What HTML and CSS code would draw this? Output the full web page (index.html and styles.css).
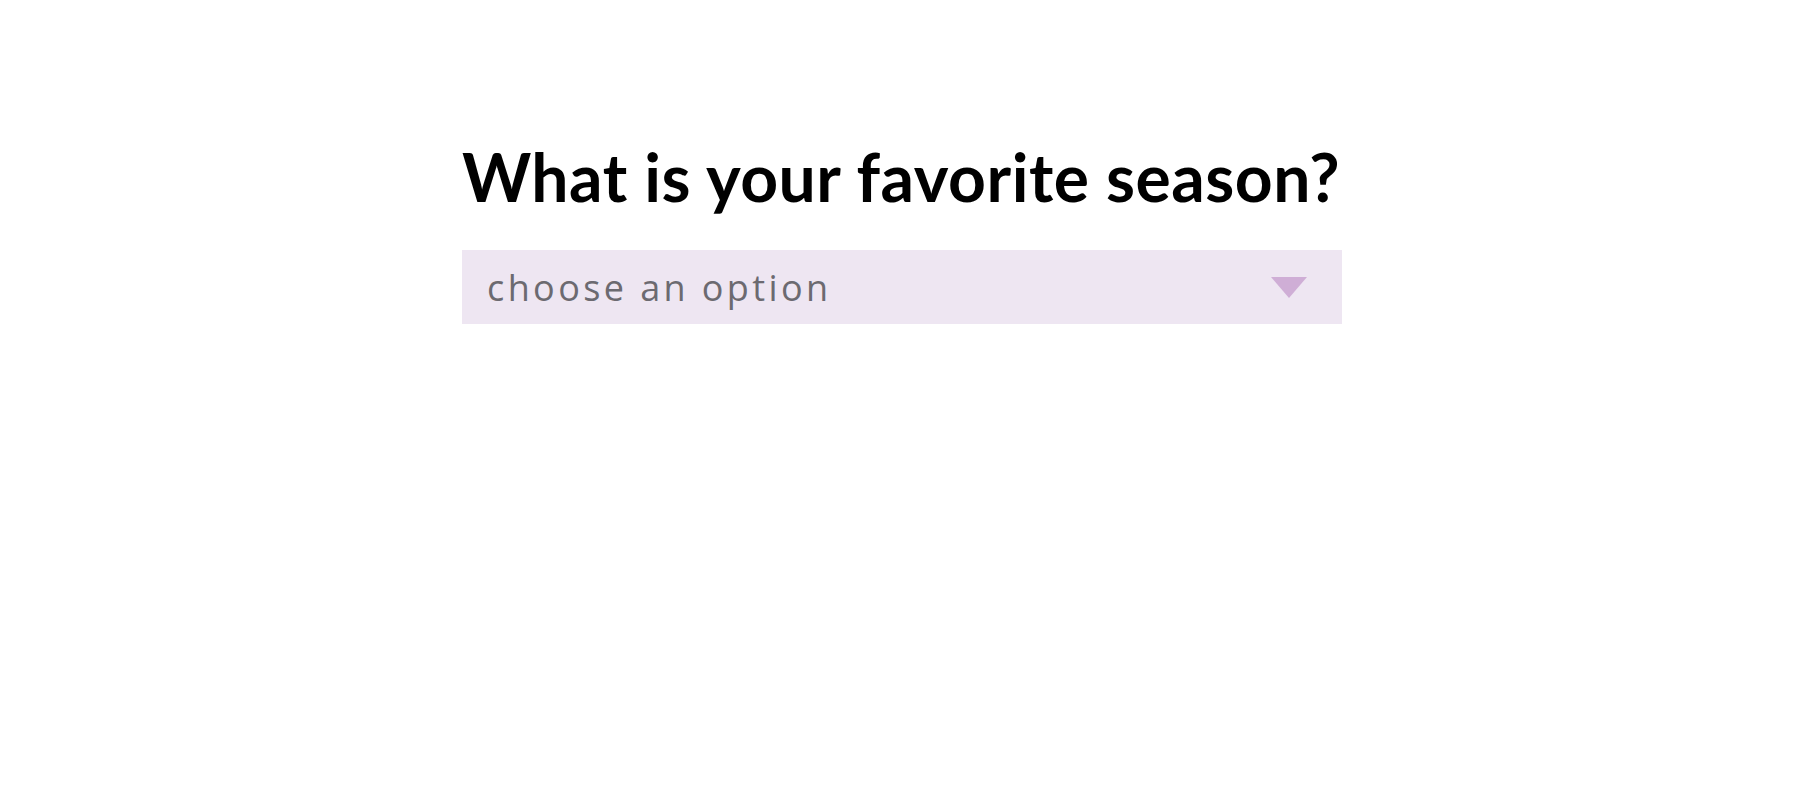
FILE: index.html
```html
<!DOCTYPE html>
<html lang="en">
<head>
<meta charset="utf-8">
<title>Favorite season</title>
<link rel="stylesheet" href="styles.css">
</head>
<body>
<main class="wrap">
  <h1 class="question">What is your favorite season?</h1>
  <div class="select">
    <span class="placeholder">choose an option</span>
    <span class="arrow"></span>
  </div>
</main>
</body>
</html>
```
FILE: styles.css
```css
html, body {
  margin: 0;
  padding: 0;
  background: #ffffff;
}
.wrap {
  width: 880px;
  margin: 0 auto;
  padding-top: 137px;
  transform: translateX(2px);
}
.question {
  margin: 0 0 33px 0;
  font-family: "Lato", sans-serif;
  font-weight: 700;
  font-size: 66px;
  line-height: 80px;
  letter-spacing: 0.5px;
  color: #000000;
}
.select {
  height: 74px;
  background: #eee6f2;
  display: flex;
  align-items: center;
  justify-content: space-between;
  padding: 0 35px 0 25px;
  box-sizing: border-box;
}
.placeholder {
  font-family: "Open Sans", sans-serif;
  font-size: 36px;
  letter-spacing: 3.4px;
  color: #6c6a70;
}
.arrow {
  width: 0;
  height: 0;
  border-left: 18px solid transparent;
  border-right: 18px solid transparent;
  border-top: 21px solid #cfaed6;
}
```
